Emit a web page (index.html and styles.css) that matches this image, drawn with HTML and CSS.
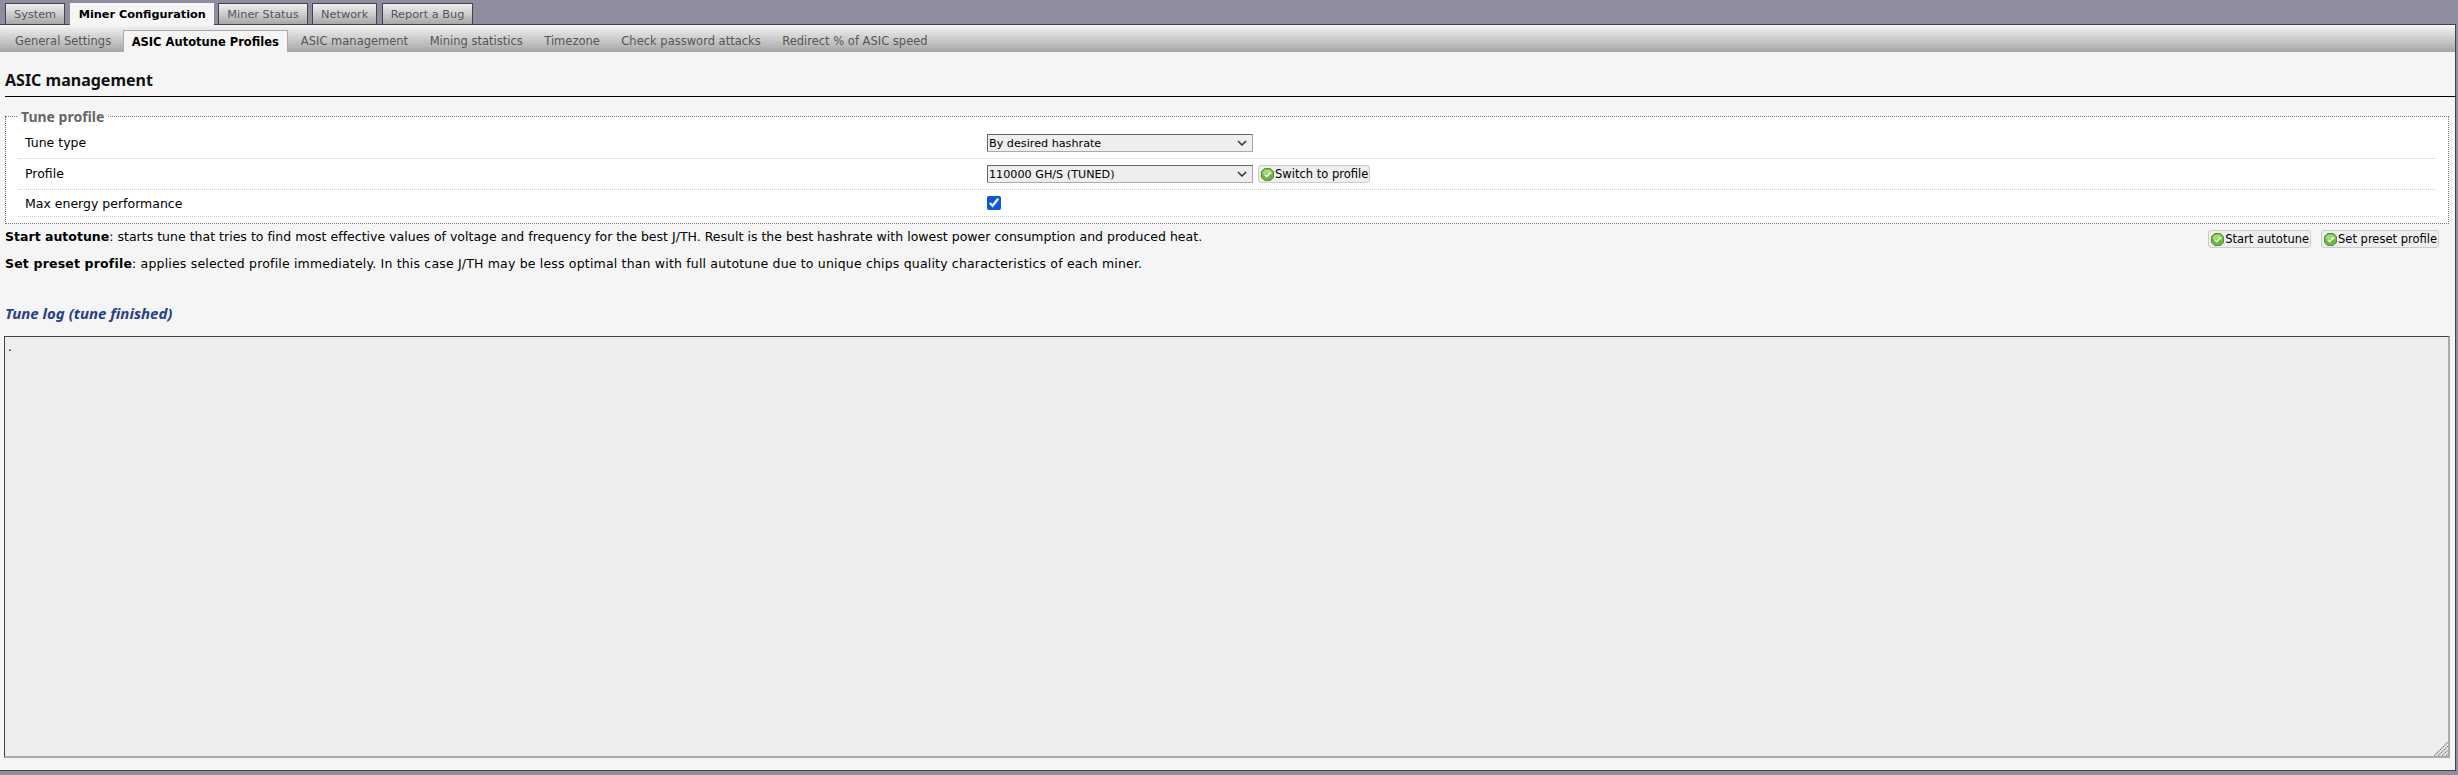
FILE: index.html
```html
<!DOCTYPE html>
<html lang="en">
<head>
<meta charset="utf-8">
<title>ASIC management</title>
<link rel="stylesheet" href="styles.css">
</head>
<body>
<ul class="tabs">
  <li class="tab">System</li>
  <li class="tab tab-active">Miner Configuration</li>
  <li class="tab">Miner Status</li>
  <li class="tab">Network</li>
  <li class="tab">Report a Bug</li>
</ul>
<div class="frame">
  <ul class="subtabs">
    <li class="subtab">General Settings</li>
    <li class="subtab subtab-active">ASIC Autotune Profiles</li>
    <li class="subtab">ASIC management</li>
    <li class="subtab">Mining statistics</li>
    <li class="subtab">Timezone</li>
    <li class="subtab">Check password attacks</li>
    <li class="subtab">Redirect % of ASIC speed</li>
  </ul>
  <main class="content">
    <h2 class="title">ASIC management</h2>
    <fieldset class="panel">
      <legend class="panel-legend">Tune profile</legend>
      <div class="row row-a">
        <label class="row-label">Tune type</label>
        <div class="row-field">
          <select class="select"><option>By desired hashrate</option></select>
        </div>
      </div>
      <div class="row row-b">
        <label class="row-label">Profile</label>
        <div class="row-field">
          <select class="select"><option>110000 GH/S (TUNED)</option></select>
          <button class="btn" type="button">
            <svg class="btn-icon" viewBox="0 0 14 14"><use href="#ok"/></svg>Switch to profile
          </button>
        </div>
      </div>
      <div class="row row-c">
        <label class="row-label">Max energy performance</label>
        <div class="row-field">
          <input class="check" type="checkbox" checked>
        </div>
      </div>
    </fieldset>
    <div class="actions">
      <div class="notes">
        <p class="note note-first"><b>Start autotune</b>: starts tune that tries to find most effective values of voltage and frequency for the best J/TH. Result is the best hashrate with lowest power consumption and produced heat.</p>
        <p class="note note-second"><b>Set preset profile</b>: applies selected profile immediately. In this case J/TH may be less optimal than with full autotune due to unique chips quality characteristics of each miner.</p>
      </div>
      <div class="action-btns">
        <button class="btn" type="button"><svg class="btn-icon" viewBox="0 0 14 14"><use href="#ok"/></svg>Start autotune</button>
        <button class="btn" type="button"><svg class="btn-icon" viewBox="0 0 14 14"><use href="#ok"/></svg>Set preset profile</button>
      </div>
    </div>
    <h3 class="log-title">Tune log (tune finished)</h3>
    <div class="log-wrap">
      <textarea class="log" readonly>.</textarea>
      <svg class="grip" viewBox="0 0 14 14" width="14" height="14">
        <path d="M0 14 L14 0 M4 14 L14 4 M8 14 L14 8 M12 14 L14 12" stroke="#777" stroke-width="1.2" stroke-dasharray="1.4 0.7" fill="none"/>
      </svg>
    </div>
  </main>
</div>
<svg class="defs" width="0" height="0">
  <defs>
    <g id="ok">
      <polygon points="4,0.5 10,0.5 13.5,4 13.5,10 10,13.5 4,13.5 0.5,10 0.5,4" fill="#6fb53f" stroke="#4a8a2a" stroke-width="1"/>
      <polygon points="4.5,2 9.5,2 12,4.5 12,7 2,7 2,4.5" fill="#a6d874"/>
      <path d="M4 7.2 L6.2 9.4 L10.2 4.8" fill="none" stroke="#fff" stroke-width="1.6"/>
    </g>
  </defs>
</svg>
</body>
</html>
```

FILE: styles.css
```css
* { box-sizing: border-box; }
html, body { margin: 0; height: 775px; overflow: hidden; }
body {
  background: #908ca0;
  font-family: "DejaVu Sans", Verdana, sans-serif;
  font-size: 12px;
  color: #000;
}
.defs { position: absolute; }
.tabs {
  display: flex;
  list-style: none;
  margin: 0;
  padding: 0 0 0 5px;
  height: 24px;
  gap: 4.5px;
  align-items: flex-end;
}
.tab {
  height: 21px;
  padding: 0 8px;
  line-height: 22px;
  font-size: 11.3px;
  color: #555;
  background: linear-gradient(#f0f0f0, #a8a8a8);
  border: 1px solid #444;
  border-bottom: 0;
}
.tab-active {
  height: 22px;
  margin-bottom: -1px;
  position: relative;
  padding: 0 7px 0 8px;
  color: #000;
  font-weight: bold;
  background: #f5f5f5;
  border-color: #f5f5f5;
}
.frame {
  width: 2456px;
  height: 747px;
  background: #f5f5f5;
  border: solid #444;
  border-width: 1px 1px 1px 0;
  display: flex;
  flex-direction: column;
}
.subtabs {
  display: flex;
  list-style: none;
  margin: 0;
  padding: 5px 0 0 5px;
  height: 27px;
  flex: none;
  background: linear-gradient(#f4f4f4, #a6a6a6);
  align-items: flex-end;
}
.subtab {
  height: 22px;
  padding: 0 10px;
  margin-right: 1.5px;
  line-height: 22px;
  font-size: 11.5px;
  color: #555;
}
.subtab-active {
  background: #f5f5f5;
  color: #000;
  font-weight: bold;
  border: 1px solid #aaa;
  border-bottom: 0;
  padding: 0 8px;
  margin-right: 3px;
}
.content {
  flex: 1;
  padding: 0 5px 0 4px;
  display: flex;
  flex-direction: column;
}
.title {
  flex: none;
  margin: 0 0 0 1px;
  height: 45px;
  padding-top: 16px;
  font-family: "Noto Sans", sans-serif;
  font-size: 16px;
  line-height: 24px;
  font-weight: bold;
  color: #111;
  border-bottom: 1px solid #000;
  width: 2451px;
}
.panel {
  flex: none;
  margin: 15px 0 0 1px;
  padding: 0 13px 0 12px;
  background: #fff;
  border: 1px dotted #777;
  height: 112px;
  width: 2444px;
  min-width: 0;
}
.panel-legend {
  padding: 0 4px 0 3px;
  font-family: "Noto Sans", sans-serif;
  font-size: 14px;
  font-weight: bold;
  color: #666;
  line-height: 9px;
  height: 9px;
}
.row {
  display: flex;
  align-items: center;
  border-bottom: 1px dotted #ccc;
}
.row-a { height: 38px; padding-top: 7px; }
.row-b { height: 31px; }
.row-c { height: 27px; }
.row-label { width: 969px; padding-left: 7px; font-size: 12.5px; }
.row-a .row-label, .row-b .row-label { margin-top: -2px; }
.row-field { display: flex; align-items: center; gap: 5px; }
.select {
  appearance: none;
  width: 266px;
  height: 18px;
  padding: 0 0 0 1px;
  font-family: "DejaVu Sans", sans-serif;
  font-size: 11.2px;
  background: #eee url("data:image/svg+xml,%3Csvg xmlns='http://www.w3.org/2000/svg' width='10' height='6'%3E%3Cpath d='M1 1 L5 5 L9 1' fill='none' stroke='%23333' stroke-width='1.5'/%3E%3C/svg%3E") no-repeat right 5px center;
  border: 1px solid #666;
  border-right-color: #aaa;
  border-bottom-color: #aaa;
  color: #000;
}
.check { margin: 0; width: 14px; height: 14px; accent-color: #0b57e0; }
.btn {
  display: inline-flex;
  align-items: center;
  gap: 1px;
  height: 18px;
  padding: 0 1px 0 2px;
  font-family: "DejaVu Sans", sans-serif;
  font-size: 11.5px;
  color: #000;
  background: #eee;
  border: 1px solid #ccc;
  border-radius: 3px;
}
.btn-icon { width: 13px; height: 13px; flex: none; }
.actions {
  flex: none;
  display: flex;
  justify-content: space-between;
  width: 2434px;
  height: 80px;
  margin-left: 1px;
}
.note { margin: 0; font-size: 12.5px; line-height: 16px; }
.note-first { margin: 5px 0 11px; letter-spacing: 0.015px; }
.note-second { letter-spacing: 0.18px; }
.action-btns { display: flex; gap: 10px; padding-top: 6px; height: 24px; }
.log-title {
  flex: none;
  margin: 0 0 0 1px;
  height: 32px;
  font-family: "Noto Sans", sans-serif;
  font-size: 15px;
  line-height: 18px;
  font-weight: bold;
  font-style: italic;
  color: #27408b;
}
.log-wrap { position: relative; width: 2446px; height: 422px; flex: none; }
.log {
  display: block;
  width: 100%;
  height: 100%;
  padding: 3px;
  resize: none;
  font-family: "DejaVu Sans", sans-serif;
  font-size: 12px;
  background: #eee;
  border: solid #444;
  border-right-color: #aaa;
  border-bottom-color: #aaa;
  border-width: 1px 2px 2px 1px;
}
.grip { position: absolute; right: 2px; bottom: 2px; }
```
